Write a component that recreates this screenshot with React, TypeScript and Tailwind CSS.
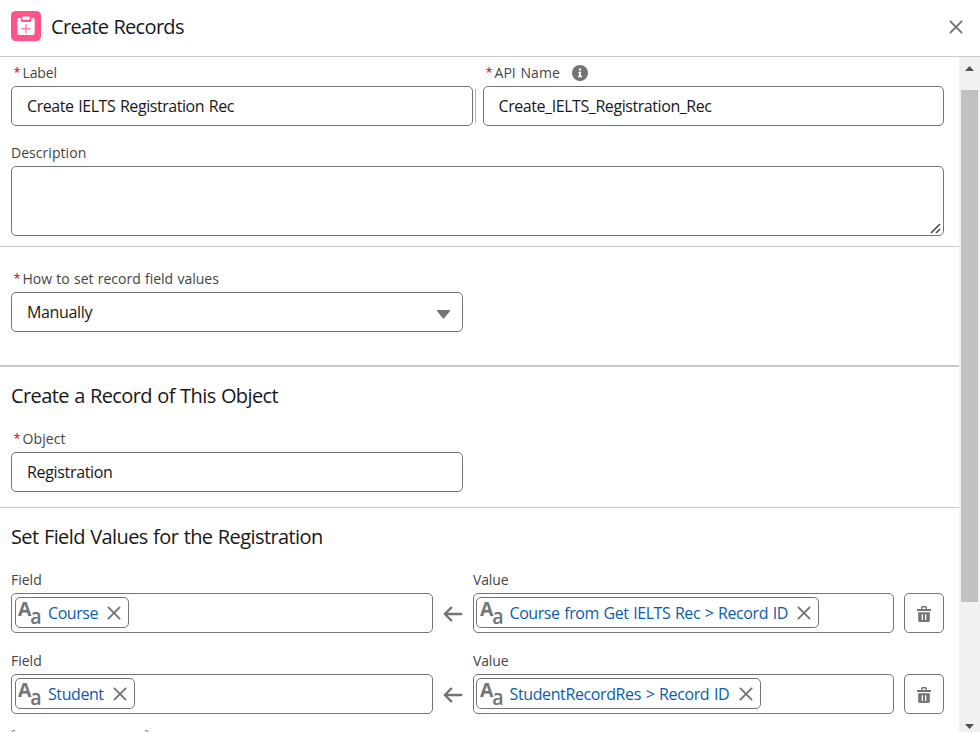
import type { ReactNode } from 'react';

const box = 'box-border rounded-[5px] border border-[#747474] bg-white';

function CloseIcon({ size }: { size: number }) {
  return (
    <svg width={size} height={size} viewBox="0 0 14 14" fill="none" stroke="#747474" strokeWidth="1.9" strokeLinecap="round">
      <path d="M1.4 1.4 12.6 12.6M12.6 1.4 1.4 12.6" />
    </svg>
  );
}

function Label({ children, required, spacing }: { children: ReactNode; required?: boolean; spacing?: string }) {
  return (
    <div className="flex h-[27px] items-center text-[14px] text-[#444444]">
      {required && <span className="ml-[2.5px] w-[9px] text-[13px] text-[#ba0517]">*</span>}
      <span className={`whitespace-nowrap ${spacing ?? 'tracking-[-0.15px]'}`}>{children}</span>
    </div>
  );
}

function TextIcon() {
  return (
    <svg width="24" height="25" viewBox="0 0 24 25" className="shrink-0 overflow-visible" fill="#747474" fontFamily="Open Sans" fontWeight="700">
      <text x="0" y="16" fontSize="19" textLength="13.4" lengthAdjust="spacingAndGlyphs">A</text>
      <text x="12.3" y="24" fontSize="21" fontWeight="600" textLength="11.4" lengthAdjust="spacingAndGlyphs">a</text>
    </svg>
  );
}

function Token({ text, width, spacing }: { text: string; width: string; spacing: string }) {
  return (
    <div className={`${box} flex h-[31px] items-center ${width}`}>
      <TextIcon />
      <span className={`ml-[6px] mt-px whitespace-nowrap text-[16px] text-[#0b5cab] ${spacing}`}>{text}</span>
      <span className="ml-auto mr-[7px] mt-px"><CloseIcon size={14} /></span>
    </div>
  );
}

function Assignment({ field, value, fw, vw, fs, vs }: { field: string; value: string; fw: string; vw: string; fs: string; vs: string }) {
  return (
    <div className="flex h-[67px] items-start">
      <div className="w-[422px]">
        <Label spacing="tracking-[0px]">Field</Label>
        <div className={`${box} flex h-10 items-start px-[3px] pt-[3px]`}><Token text={field} width={fw} spacing={fs} /></div>
      </div>
      <div className="mt-[27px] flex h-10 w-10 items-center justify-center pt-[2px]">
        <svg width="20" height="16" viewBox="0 0 20 16" fill="none" stroke="#747474" strokeWidth="2.3" strokeLinecap="round" strokeLinejoin="round">
          <path d="M18.3 8H2M8.2 1.6 1.8 8l6.4 6.4" />
        </svg>
      </div>
      <div className="w-[421px]">
        <Label spacing="tracking-[-0.15px]">Value</Label>
        <div className={`${box} flex h-10 items-start px-[2px] pt-[3px]`}><Token text={value} width={vw} spacing={vs} /></div>
      </div>
      <button className={`${box} ml-[10px] mt-[27px] flex h-10 w-10 items-center justify-center pt-[2px]`}>
        <svg width="14" height="16" viewBox="0 0 14 16" fill="#747474">
          <path d="M0 2.9h4V1.5Q4 0 5.5 0h3Q10 0 10 1.5v1.4h4v2.1H0ZM5.4 2.9h3.2V1.4H5.4Z" fillRule="evenodd" />
          <path d="M1.2 6.3h11.6v8.1Q12.8 16 11.2 16H2.8Q1.2 16 1.2 14.4ZM4.7 8.3v5.6h1.3V8.3ZM8 8.3v5.6h1.3V8.3Z" fillRule="evenodd" />
        </svg>
      </button>
    </div>
  );
}

export default function App() {
  return (
    <div className="flex h-[732px] w-[980px] flex-col overflow-hidden bg-white font-['Open_Sans',sans-serif] text-[#181818]">
      <header className="flex h-[57px] shrink-0 items-center border-b border-[#c9c9c9] pb-[3px] pl-[11px] pr-[17px]">
        <svg className="mb-[2px]" width="30" height="30" viewBox="0 0 30 30">
          <rect width="30" height="30" rx="4.5" fill="#ff538a" />
          <path d="M8.3 7h1.4v1.4q0 2.6 2.5 2.6h5.6q2.5 0 2.5-2.6V7h1.4q2 0 2 2v13.1q0 2-2 2H8.3q-2 0-2-2V9q0-2 2-2Z" fill="#fff" />
          <path d="M12.3 5.6h5.4q1.1 0 1.1 1.1v1q0 1.1-1.1 1.1h-5.4q-1.1 0-1.1-1.1v-1q0-1.1 1.1-1.1Z" fill="#fff" />
          <path d="M15 13.6v8.2M10.9 17.7h8.2" stroke="#ff80a9" strokeWidth="1.4" strokeLinecap="round" />
        </svg>
        <h1 className="ml-[10px] whitespace-nowrap text-[20px] tracking-[-0.68px] [word-spacing:0.5px]">Create Records</h1>
        <button className="ml-auto"><CloseIcon size={14} /></button>
      </header>
      <div className="flex min-h-0 flex-1">
        <main className="w-[959px] overflow-hidden">
          <section className="h-[190px] border-b border-[#c9c9c9] pl-[11px] pr-[15px] pt-[2px]">
            <div className="flex">
              <div className="w-[462px]">
                <Label required>Label</Label>
                <div className={`${box} flex h-10 items-center pl-[15px]`}>
                  <span className="whitespace-nowrap text-[16px] tracking-[-0.45px] [word-spacing:1px]">Create IELTS Registration Rec</span>
                </div>
              </div>
              <div className="ml-[2px] mt-[30px] h-[34px] w-px bg-[#a7b7c8]" />
              <div className="ml-[7px] w-[461px]">
                <div className="flex items-center">
                  <Label required spacing="tracking-[0.05px] [word-spacing:1px]">API Name</Label>
                  <svg className="ml-3" width="16" height="16" viewBox="0 0 16 16">
                    <circle cx="8" cy="8" r="8" fill="#747474" />
                    <path d="M7 3.5h2v2H7ZM6.3 6.7H9v4.1h1v1.4H6v-1.4h1V8h-.7Z" fill="#fff" />
                  </svg>
                </div>
                <div className={`${box} flex h-10 items-center pl-[14.5px]`}>
                  <span className="whitespace-nowrap text-[16px] tracking-[-0.43px]">Create_IELTS_Registration_Rec</span>
                </div>
              </div>
            </div>
            <div className="pt-[13px]">
              <Label spacing="tracking-[0.05px]">Description</Label>
              <div className={`${box} flex h-[70px] items-end justify-end pb-px pr-[2px]`}>
                <svg width="11" height="11" viewBox="0 0 11 11" stroke="#444" strokeWidth="1.5">
                  <path d="M1 10 10 1M6 10l4-4" />
                </svg>
              </div>
            </div>
          </section>
          <section className="h-[120px] border-b-2 border-[#c9c9c9] pl-[11px] pt-[18px]">
            <Label required spacing="tracking-[0px] [word-spacing:0.6px]">How to set record field values</Label>
            <div className={`${box} flex h-10 w-[452px] items-center pl-[15px] pr-3`}>
              <span className="text-[16px] tracking-[-0.35px]">Manually</span>
              <svg className="ml-auto mt-[5px]" width="13" height="9" viewBox="0 0 13 9" fill="#747474"><path d="M0 0h13v1L7.2 8.2q-.7.8-1.4 0L0 1Z" /></svg>
            </div>
          </section>
          <section className="h-[141px] border-b border-[#c9c9c9] pl-[11px]">
            <h2 className="flex h-[58px] items-center whitespace-nowrap text-[20px] tracking-[-0.6px] [word-spacing:0.7px]">Create a Record of This Object</h2>
            <Label required spacing="tracking-[0.1px]">Object</Label>
            <div className={`${box} flex h-10 w-[452px] items-center pl-[15px]`}>
              <span className="text-[16px] tracking-[-0.33px]">Registration</span>
            </div>
          </section>
          <section className="pl-[11px]">
            <h2 className="flex h-[58px] items-center whitespace-nowrap text-[20px] tracking-[-0.6px] [word-spacing:0.8px]">Set Field Values for the Registration</h2>
            <Assignment field="Course" fw="w-[114px] pl-[2px]" fs="tracking-[-0.45px]" value="Course from Get IELTS Rec > Record ID" vw="w-[343px] pl-[2.5px]" vs="tracking-[-0.43px] [word-spacing:0.9px]" />
            <div className="h-[14px]" />
            <Assignment field="Student" fw="w-[120px] pl-[2px]" fs="tracking-[-0.42px]" value="StudentRecordRes > Record ID" vw="w-[285px] pl-[2.5px]" vs="tracking-[-0.38px] [word-spacing:0.9px]" />
            <div className="mt-4 flex w-[138px] justify-between">
              <span className="h-3 w-[4px] rounded-tl-[5px] border-l border-t border-[#747474]" />
              <span className="h-3 w-[4px] rounded-tr-[5px] border-r border-t border-[#747474]" />
            </div>
          </section>
        </main>
        <aside className="flex w-[21px] flex-col items-center bg-[#f1f1f1]">
          <div className="flex h-[33px] items-start pt-[9px]">
            <svg width="9" height="5" viewBox="0 0 9 5" fill="#505050"><path d="M4.5 0 9 5H0Z" /></svg>
          </div>
          <div className="h-[512px] w-[17px] bg-[#c1c1c1]" />
          <div className="mb-[3px] mt-auto">
            <svg width="9" height="5" viewBox="0 0 9 5" fill="#505050"><path d="M0 0h9L4.5 5Z" /></svg>
          </div>
        </aside>
      </div>
    </div>
  );
}
